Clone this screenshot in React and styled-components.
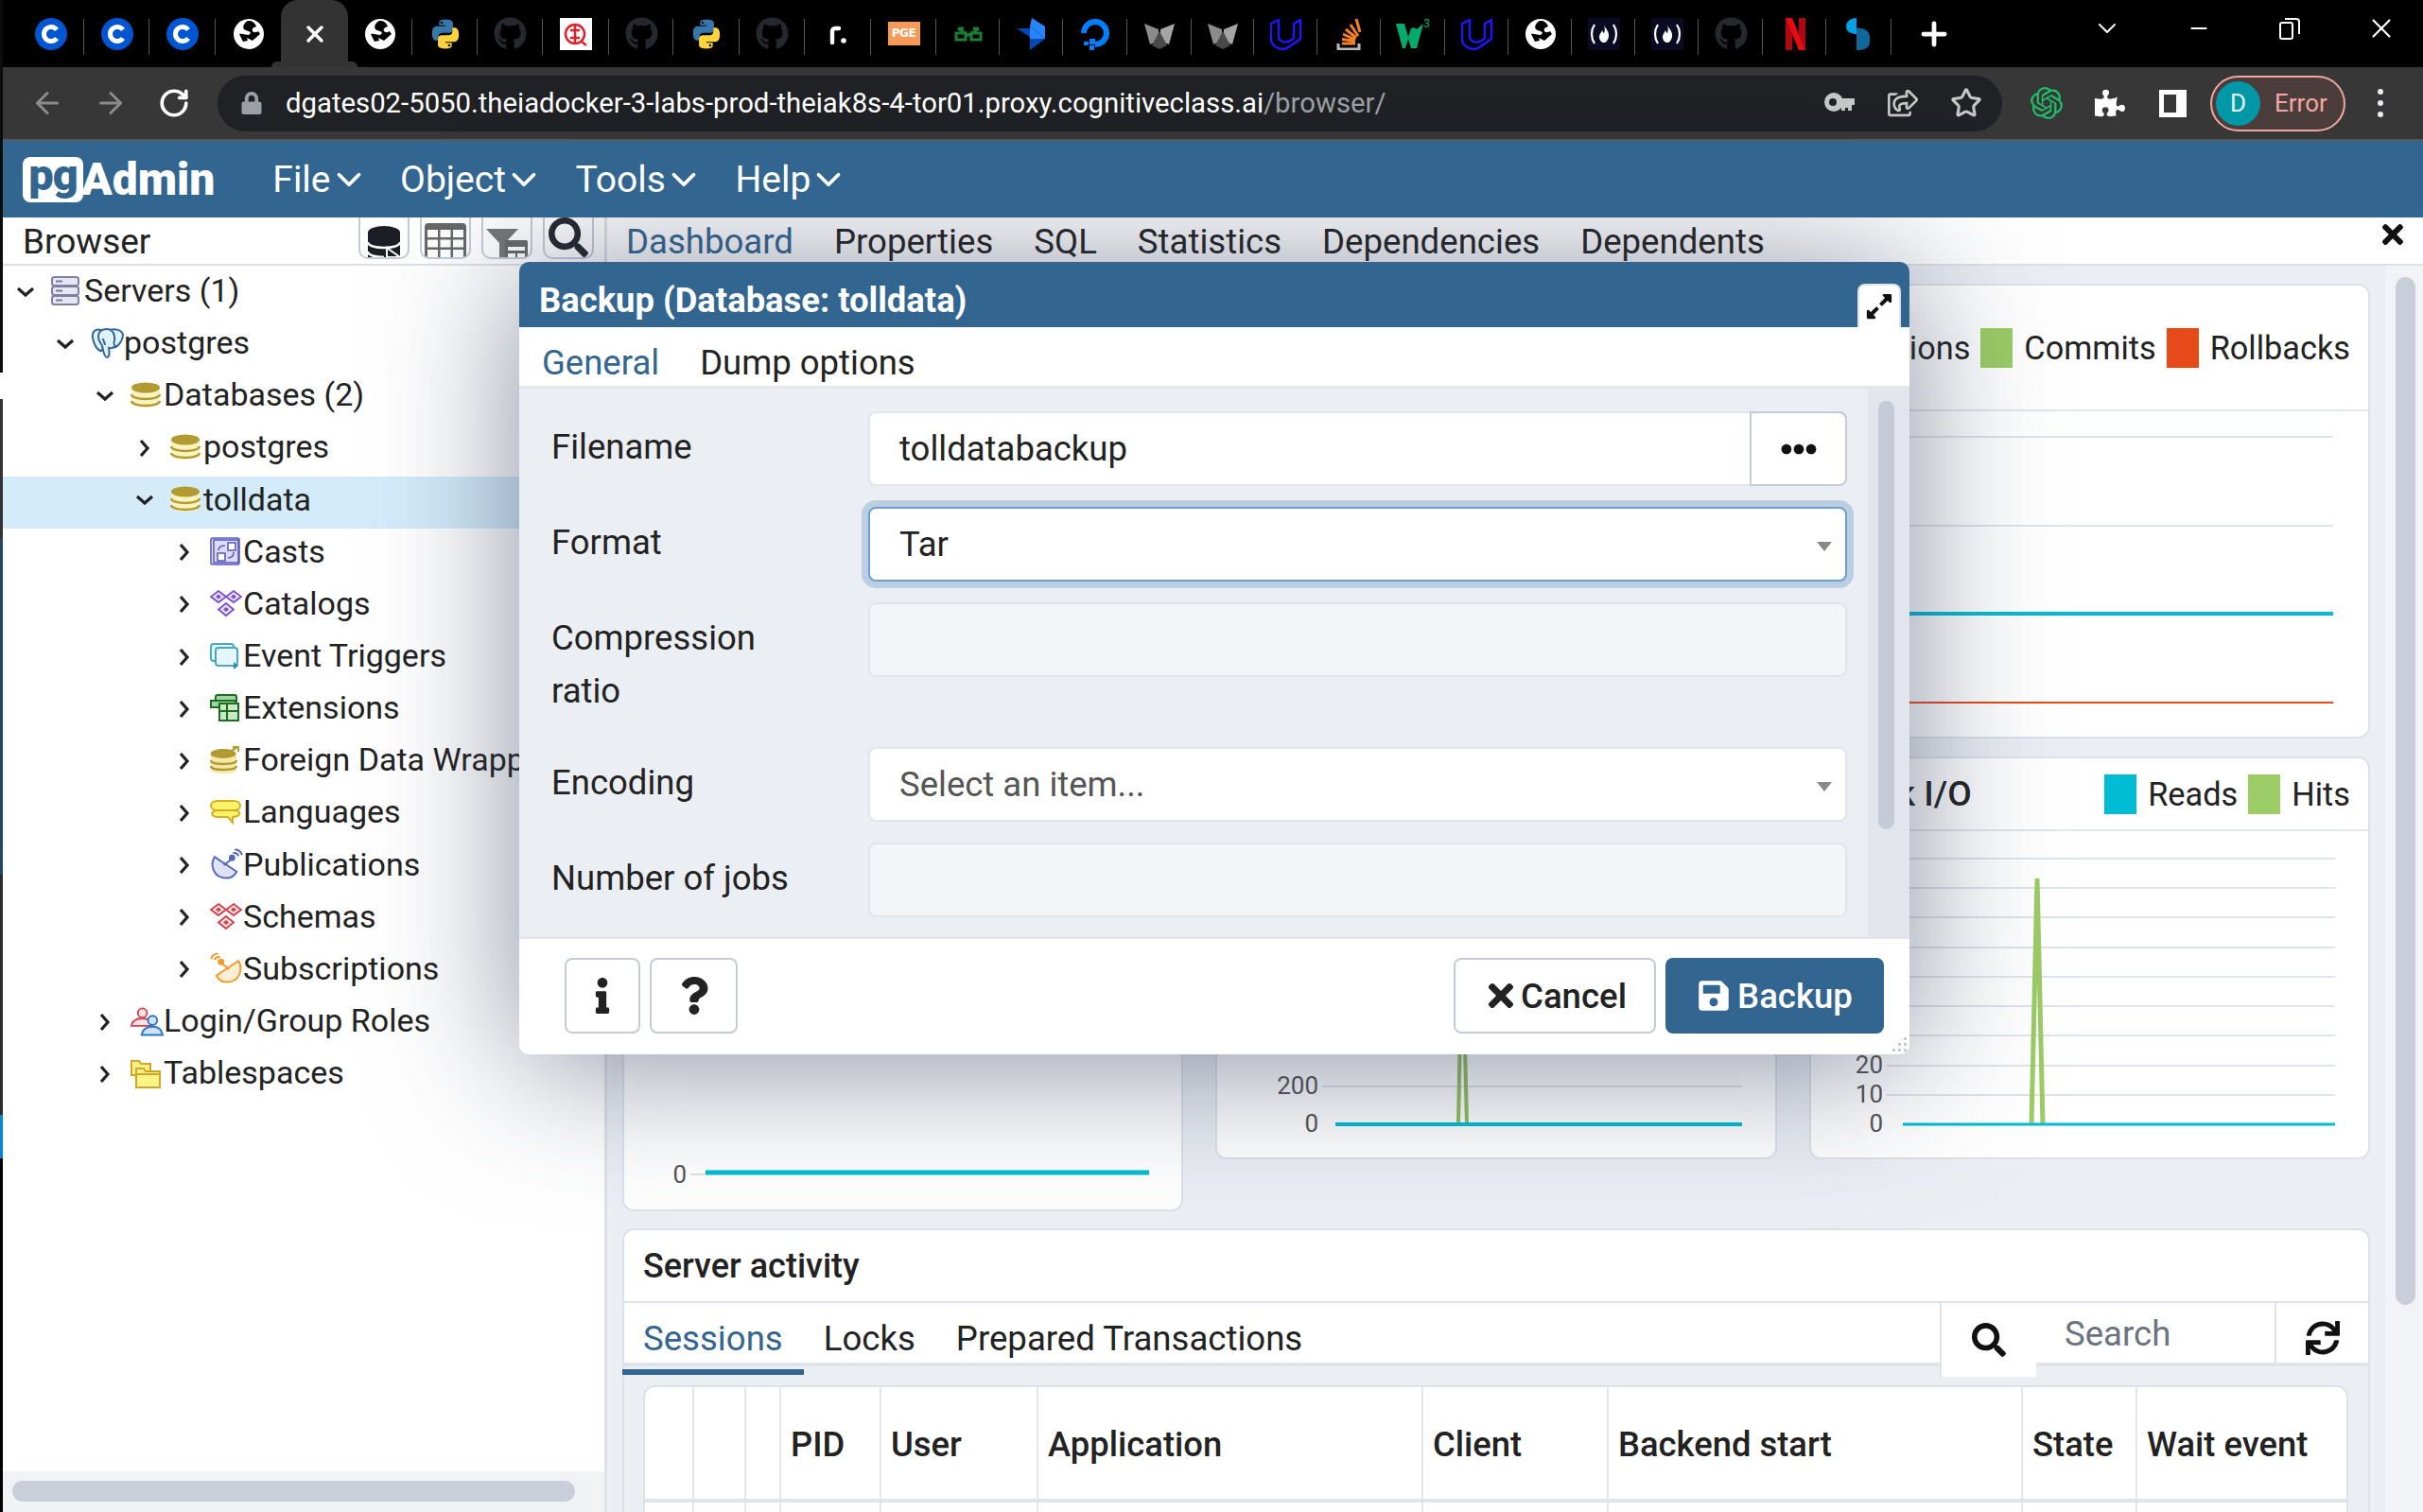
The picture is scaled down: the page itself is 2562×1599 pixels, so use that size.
import React from 'react';
import styled, { createGlobalStyle } from 'styled-components';
import { FaTimes, FaSave, FaInfo, FaQuestion, FaExpandAlt, FaEllipsisH, FaSearch, FaSync, FaGithub, FaLock, FaRegShareSquare, FaPuzzlePiece } from 'react-icons/fa';
import { SiOpenai } from 'react-icons/si';
import { ArrowLeft, ArrowRight, RotateCw, Star, Plus, ChevronDown, Minus, X } from 'lucide-react';

const BLUE = '#326690';

const Global = createGlobalStyle`
  html, body { margin: 0; padding: 0; background: #fff; }
  * { box-sizing: border-box; }
  body { font-family: Roboto, "Liberation Sans", sans-serif; color: #222; }
`;

const Page = styled.div`
  position: relative;
  width: 2562px;
  height: 1599px;
  overflow: hidden;
  display: flex;
  flex-direction: column;
`;

const EdgeStrip = styled.div`
  position: absolute;
  left: 0;
  top: 0;
  width: 3px;
  z-index: 30;
  display: flex;
  flex-direction: column;
`;
const EdgeBit = styled.div`
  height: ${p => p.$h}px;
  background: ${p => p.$c};
`;

/* ---------- chrome ---------- */
const TabStrip = styled.div`
  height: 71px;
  background: #000;
  display: flex;
  padding-left: 19px;
  position: relative;
`;
const Tab = styled.div`
  width: ${p => p.$w}px;
  height: 71px;
  flex: none;
  display: flex;
  align-items: center;
  justify-content: center;
  position: relative;
  &::after {
    content: '';
    display: ${p => (p.$noSep ? 'none' : 'block')};
    position: absolute;
    right: 0;
    top: 20px;
    height: 38px;
    width: 1px;
    background: #555;
  }
  svg { display: block; }
`;
const ActiveTab = styled(Tab)`
  background: #333;
  border-radius: 18px 18px 0 0;
  color: #fff;
  &::before {
    content: '';
    position: absolute;
    left: -10px;
    right: -10px;
    bottom: 0;
    height: 6px;
    background: #333;
    border-radius: 8px 8px 0 0;
  }
`;
const NewTab = styled.div`
  margin-left: 26px;
  height: 71px;
  display: flex;
  align-items: center;
  color: #fff;
`;
const WindowButtons = styled.div`
  position: absolute;
  right: -4px;
  top: 0;
  height: 60px;
  display: flex;
  color: #fff;
`;
const WinBtn = styled.div`
  width: 96.5px;
  height: 60px;
  display: flex;
  align-items: center;
  justify-content: center;
`;
const RestoreIcon = () => (
  <svg width="22" height="24" viewBox="0 0 22 24" fill="none" stroke="#fff" strokeWidth="2">
    <rect x="1" y="6" width="13" height="17" rx="2" />
    <path d="M6 2h12a3 3 0 013 3v13" />
  </svg>
);
const KeyIcon = () => (
  <svg width="32" height="24" viewBox="0 0 32 24" fill="#c4c7c5">
    <path fillRule="evenodd" d="M10 1a10 10 0 110 20 10 10 0 010-20zM9 7a4 4 0 100 8 4 4 0 000-8z" />
    <path d="M18 7h14v7h-3v6h-4v-3h-3v3h-4z" />
  </svg>
);

const Toolbar = styled.div`
  height: 78px;
  background: #373737;
  border-bottom: 2px solid #5a5a5a;
  display: flex;
  align-items: center;
  position: relative;
`;
const NavIcon = styled.div`
  width: ${p => p.$w || 67}px;
  display: flex;
  justify-content: center;
  color: ${p => p.$c || '#fff'};
  flex: none;
`;
const Omnibox = styled.div`
  margin-left: 13px;
  width: 1887px;
  height: 59px;
  background: #202124;
  border-radius: 30px;
  display: flex;
  align-items: center;
  padding-left: 24px;
  flex: none;
`;
const Url = styled.div`
  margin-left: 24px;
  flex: 1;
  font-size: 29.3px;
  color: #fff;
  white-space: nowrap;
  span { color: #9aa0a6; }
`;
const ErrorPill = styled.div`
  margin-left: 6px;
  width: 143px;
  height: 59px;
  flex: none;
  border-radius: 30px;
  border: 2px solid #f2a9a1;
  background: #4a3d3c;
  display: flex;
  align-items: center;
  padding-left: 4px;
  gap: 15px;
  font-size: 26px;
  color: #f2a9a1;
`;
const Avatar = styled.div`
  width: 47px;
  height: 47px;
  border-radius: 50%;
  background: #0097a7;
  color: #e6f7f9;
  display: flex;
  align-items: center;
  justify-content: center;
  font-size: 26px;
`;
const Kebab = styled.div`
  margin-left: 34px;
  display: flex;
  flex-direction: column;
  gap: 6px;
  i { display: block; width: 6px; height: 6px; border-radius: 50%; background: #e8eaed; }
`;
const SidePanelIcon = styled.div`
  width: 29px;
  height: 29px;
  border: 5px solid #fff;
  border-right-width: 11px;
`;

/* ---------- pgadmin nav ---------- */
const NavBar = styled.div`
  height: 81px;
  background: ${BLUE};
  display: flex;
  align-items: center;
  padding-left: 24px;
  color: #fff;
  position: relative;
  z-index: 20;
`;
const Logo = styled.div`
  display: flex;
  align-items: center;
  margin-right: 61px;
  b { font-size: 48px; font-weight: 900; letter-spacing: 0; margin-left: -2px; }
`;
const LogoBox = styled.div`
  width: 64px;
  height: 48px;
  background: #fff;
  border-radius: 8px;
  color: ${BLUE};
  font-size: 47px;
  font-weight: 900;
  line-height: 38px;
  text-align: center;
  letter-spacing: -1px;
`;
const Menu = styled.div`
  display: flex;
  align-items: center;
  font-size: 39px;
  gap: 0;
  margin-right: 33.500px;
  svg { margin-left: -2px; }
`;

/* ---------- workspace ---------- */
const Workspace = styled.div`
  flex: 1;
  min-height: 0;
  display: flex;
`;
const LeftPanel = styled.div`
  width: 640px;
  flex: none;
  display: flex;
  flex-direction: column;
  background: #fff;
`;
const BrowserBar = styled.div`
  height: 51px;
  flex: none;
  border-bottom: 2px solid #dde1e8;
  display: flex;
  align-items: flex-start;
  padding-left: 24px;
  overflow: hidden;
`;
const BrowserTitle = styled.div`
  font-size: 37px;
  line-height: 51px;
  width: 355px;
`;
const ToolBtn = styled.div`
  width: 54px;
  height: 44px;
  margin-right: 11px;
  border: 2px solid #c6cbd8;
  border-top: none;
  border-radius: 0 0 10px 10px;
  display: flex;
  justify-content: center;
  overflow: hidden;
  svg { display: block; }
`;
const Tree = styled.div`
  flex: 1;
  padding-top: 2px;
  overflow: hidden;
`;
const Row = styled.div`
  height: 55.15px;
  display: flex;
  align-items: center;
  padding-left: ${p => 15 + p.$depth * 42}px;
  background: ${p => (p.$selected ? '#d4ecfa' : 'transparent')};
  white-space: nowrap;
  font-size: 34px;
  color: #222;
`;
const Chevron = styled.div`
  width: 39px;
  flex: none;
  display: flex;
  padding-left: 2px;
  margin-top: -4px;
`;
const TreeIcon = styled.div`
  width: 35px;
  height: 34px;
  margin-top: -6px;
  flex: none;
  display: flex;
  align-items: center;
  svg { display: block; }
`;
const RowLabel = styled.span`
  margin-top: -7px;
`;
const HScrollTrack = styled.div`
  height: 43px;
  flex: none;
  background: #f1f2f4;
  padding: 10px 32px 11px 13px;
`;
const Thumb = styled.div`
  height: 100%;
  background: #c9ced8;
  border-radius: 11px;
`;

const RightPanel = styled.div`
  flex: 1;
  min-width: 0;
  display: flex;
  flex-direction: column;
  border-left: 3px solid #dde1e8;
  margin-left: -1px;
  background: #ebeef3;
`;
const DashTabs = styled.div`
  height: 51px;
  flex: none;
  background: #fff;
  border-bottom: 2px solid #dde1e8;
  display: flex;
  align-items: flex-start;
  padding-left: 20px;
  gap: 43px;
  font-size: 36.6px;
  line-height: 51px;
`;
const DashTab = styled.div`
  color: ${p => (p.$active ? BLUE : '#222')};
`;
const PanelClose = styled.div`
  margin-left: auto;
  margin-right: 16px;
  margin-top: 2px;
  line-height: 0;
  color: #111;
`;
const ScrollBody = styled.div`
  flex: 1;
  min-height: 0;
  display: flex;
`;
const Dashboard = styled.div`
  width: 1880px;
  flex: none;
  padding: 19px 16px 0 16px;
  display: flex;
  flex-direction: column;
  overflow: hidden;
`;
const MainScroll = styled.div`
  flex: 1;
  background: #f2f3f6;
  padding: 12px 8px 0 11px;
`;
const MainThumb = styled.div`
  height: 1087px;
  background: #c9ced8;
  border-radius: 11px;
`;
const CardRow = styled.div`
  display: flex;
  align-items: flex-start;
  gap: 34px;
  margin-bottom: ${p => p.$mb}px;
`;
const Card = styled.div`
  flex: 1;
  min-width: 0;
  height: ${p => p.$h}px;
  background: #fff;
  border: 2px solid #dde1e8;
  border-radius: 12px;
  overflow: hidden;
`;
const CardHeader = styled.div`
  height: ${p => p.$h}px;
  border-bottom: 2px solid #e2e5eb;
  padding: 0 19px 0 18px;
  display: flex;
  align-items: center;
  white-space: nowrap;
`;
const CardTitle = styled.div`
  flex: 1;
  min-width: 0;
  overflow: hidden;
  font-size: 37px;
  font-weight: 500;
`;
const LegendSwatch = styled.i`
  display: block;
  flex: none;
  width: 34px;
  height: 42px;
  background: ${p => p.$c};
  margin: 0 12px 0 11px;
`;
const LegendText = styled.span`
  flex: none;
  font-size: 34.3px;
`;
const ChartSvg = styled.svg`
  display: block;
  text { font-family: Roboto, sans-serif; font-size: 26px; fill: #555; text-anchor: end; }
`;

const Activity = styled.div`
  background: #fff;
  border: 2px solid #dde1e8;
  border-bottom: none;
  border-radius: 12px 12px 0 0;
  flex: 1;
  display: flex;
  flex-direction: column;
`;
const ActivityTitle = styled.div`
  height: 77px;
  flex: none;
  padding: 0 20px;
  display: flex;
  align-items: center;
  font-size: 36px;
  font-weight: 500;
  border-bottom: 2px solid #dde1e8;
`;
const ActivityTabs = styled.div`
  height: 67px;
  flex: none;
  display: flex;
  border-bottom: 4px solid #e0e3ea;
`;
const SubTabs = styled.div`
  flex: 1;
  display: flex;
  gap: 43px;
  padding: 10px 0 0 20px;
  font-size: 36.6px;
  line-height: 56px;
`;
const SubTab = styled.div`
  position: relative;
  color: ${p => (p.$active ? BLUE : '#222')};
  ${p => p.$active && `
    &::after {
      content: '';
      position: absolute;
      left: -22px;
      right: -22px;
      bottom: -13px;
      height: 6px;
      background: ${BLUE};
    }
  `}
`;
const SearchCell = styled.div`
  width: 102px;
  height: 78px;
  background: #fff;
  border-left: 2px solid #e0e3ea;
  position: relative;
  z-index: 1;
  display: flex;
  justify-content: center;
  padding-top: 21px;
  color: #111;
`;
const SearchText = styled.div`
  width: 252px;
  padding: 8px 0 0 30px;
  font-size: 36.6px;
  line-height: 50px;
  color: #6b7280;
`;
const RefreshCell = styled.div`
  width: 99px;
  border-left: 2px solid #e0e3ea;
  display: flex;
  justify-content: center;
  padding-top: 19px;
  color: #111;
`;
const ActivityBody = styled.div`
  flex: 1;
  background: #ebeef3;
  padding: 20px 21px 0 20px;
`;
const SessionTable = styled.div`
  background: #fff;
  border: 2px solid #dde1e8;
  border-bottom: none;
  border-radius: 12px 12px 0 0;
  height: 200px;
`;
const TableRow = styled.div`
  display: grid;
  grid-template-columns: 52px 55px 37px 106px 166px 407px 196px 438px 121px 1fr;
  height: ${p => p.$h}px;
  border-bottom: ${p => (p.$line ? '4px solid #e0e3ea' : 'none')};
`;
const HeadCell = styled.div`
  border-right: 2px solid #e3e6eb;
  padding: 2px 0 0 10px;
  display: flex;
  align-items: center;
  font-size: 36.4px;
  font-weight: 500;
  white-space: nowrap;
  &:last-child { border-right: none; }
`;

/* ---------- dialog ---------- */
const Dialog = styled.div`
  position: absolute;
  left: 549px;
  top: 277px;
  width: 1470px;
  height: 838px;
  z-index: 10;
  background: #fff;
  border-radius: 10px;
  box-shadow: 0 10px 150px rgba(50, 60, 90, 0.58);
  display: flex;
  flex-direction: column;
`;
const DialogHead = styled.div`
  height: 69px;
  flex: none;
  background: ${BLUE};
  border-radius: 10px 10px 0 0;
  color: #fff;
  font-size: 36.4px;
  font-weight: 700;
  padding: 12px 9px 0 21px;
  display: flex;
  align-items: center;
  justify-content: space-between;
`;
const ExpandBtn = styled.div`
  width: 46px;
  height: 46px;
  align-self: flex-end;
  background: #fff;
  border: 2px solid #dde1e8;
  border-bottom: none;
  border-radius: 8px 8px 0 0;
  color: #111;
  display: flex;
  align-items: center;
  justify-content: center;
`;
const DialogTabs = styled.div`
  height: 65px;
  flex: none;
  border-bottom: 3px solid #e3e6ec;
  padding: 10px 0 0 24px;
  display: flex;
  gap: 43px;
  font-size: 36.5px;
  line-height: 56px;
`;
const DialogBody = styled.div`
  height: 579px;
  flex: none;
  display: flex;
  background: #ebeef3;
  overflow: hidden;
`;
const Form = styled.div`
  width: 1426px;
  flex: none;
  padding: 24px 22px 0 34px;
  display: flex;
  flex-direction: column;
  gap: 22px;
`;
const FormRow = styled.div`
  display: grid;
  grid-template-columns: 335px 1fr;
  align-items: start;
`;
const Label = styled.div`
  font-size: 36.5px;
  line-height: 56px;
  padding: 10px 0 9px;
  max-width: 260px;
`;
const Field = styled.div`
  height: 79px;
  border: 2px solid ${p => (p.$focus ? '#6c9fca' : '#e1e4ea')};
  border-radius: 8px;
  background: ${p => (p.$disabled ? '#f3f5f8' : '#fff')};
  display: flex;
  align-items: center;
  padding-left: 31px;
  font-size: 36.5px;
  color: ${p => (p.$placeholder ? '#555' : '#222')};
  position: relative;
  box-shadow: ${p => (p.$focus ? '0 0 0 7px #bacfe1' : 'none')};
`;
const Caret = styled.i`
  position: absolute;
  right: 14px;
  top: 35px;
  border-left: 8px solid transparent;
  border-right: 8px solid transparent;
  border-top: 10px solid #888;
`;
const EllipsisBtn = styled.div`
  position: absolute;
  right: -2px;
  top: -2px;
  width: 103px;
  height: 79px;
  border: 2px solid #c6cbd8;
  border-radius: 0 8px 8px 0;
  display: flex;
  align-items: center;
  justify-content: center;
  color: #111;
`;
const DialogScroll = styled.div`
  flex: 1;
  background: #e2e5ec;
  padding: 13px 16px 0 11px;
`;
const DialogThumb = styled.div`
  height: 453px;
  background: #c5cbd6;
  border-radius: 9px;
`;
const DialogFoot = styled.div`
  flex: 1;
  border-top: 3px solid #e3e6ec;
  padding: 20px 27px 0 48px;
  display: flex;
  align-items: flex-start;
  gap: 10px;
  position: relative;
`;
const Btn = styled.div`
  width: ${p => p.$w}px;
  height: 80px;
  flex: none;
  border-radius: 8px;
  border: 2px solid ${p => (p.$primary ? BLUE : '#c6cbd8')};
  background: ${p => (p.$primary ? BLUE : '#fff')};
  color: ${p => (p.$primary ? '#fff' : '#222')};
  display: flex;
  align-items: center;
  justify-content: center;
  gap: ${p => p.$gap ?? 7}px;
  font-size: 36.6px;
  font-weight: 500;
  margin-left: ${p => (p.$push ? 'auto' : '0')};
`;
const Grip = styled.svg`
  position: absolute;
  right: 2px;
  bottom: 2px;
`;

/* ---------- favicons ---------- */
const Ico = ({ children, w = 34, h = 34, vb = '0 0 34 34' }) => (
  <svg width={w} height={h} viewBox={vb} fill="none">{children}</svg>
);
const Coursera = () => (
  <Ico>
    <ellipse cx="17" cy="17" rx="17" ry="17" fill="#0056d2" />
    <path d="M23 12.5a7.5 7.5 0 100 9" stroke="#fff" strokeWidth="5" />
  </Ico>
);
const Globe = () => (
  <Ico>
    <circle cx="17" cy="17" r="15" fill="#fff" />
    <path d="M17 2c-5 3-7 7-5 10 2 2 6 1 7 4l-2 2c-3 0-7-2-10-1l4 8 5-1-1-3 6 3 8-7-2-3c-3 2-5 1-6 0-1-3 1-4 4-5-1-3-4-6-8-7z" fill="#000" />
    <circle cx="17" cy="17" r="15" stroke="#fff" strokeWidth="2" />
  </Ico>
);
const Python = () => (
  <svg width="34" height="34" viewBox="0 0 24 24">
    <path fill="#3776ab" d="M11.9 1C7 1 7.3 3.1 7.3 3.1v2.4H12v.7H5.4S2 5.8 2 11.4s3 5.4 3 5.4h1.8v-2.6s-.1-3 3-3h5s2.8 0 2.8-2.8V3.8S18 1 11.9 1zM9.2 2.6a.9.9 0 110 1.8.9.9 0 010-1.8z" />
    <path fill="#ffd43b" transform="rotate(180 12 12)" d="M11.9 1C7 1 7.3 3.1 7.3 3.1v2.4H12v.7H5.4S2 5.8 2 11.4s3 5.4 3 5.4h1.8v-2.6s-.1-3 3-3h5s2.8 0 2.8-2.8V3.8S18 1 11.9 1zM9.2 2.6a.9.9 0 110 1.8.9.9 0 010-1.8z" />
  </svg>
);
const Github = () => <FaGithub size={35} color="#25292e" />;
const RedSeal = () => (
  <Ico>
    <rect width="34" height="34" fill="#fff" />
    <circle cx="16" cy="17" r="10" stroke="#e0202a" strokeWidth="2.5" />
    <path d="M16 6v22M11 13h10M11 21h10M23 25l5 4" stroke="#e0202a" strokeWidth="2.5" />
  </Ico>
);
const ReplIt = () => (
  <Ico>
    <path d="M11 26V14a3 3 0 013-3h4" stroke="#fff" strokeWidth="4.4" strokeLinecap="round" />
    <circle cx="23" cy="24" r="2.8" fill="#fff" />
  </Ico>
);
const PgeBadge = styled.div`
  width: 34px;
  height: 25px;
  background: #f79a55;
  color: #fff;
  font-family: "DejaVu Sans", sans-serif;
  font-size: 12px;
  font-weight: 700;
  line-height: 25px;
  text-align: center;
  letter-spacing: -0.5px;
`;
const Glasses = () => (
  <Ico>
    <g stroke="#1d7d33" strokeWidth="3">
      <rect x="4" y="16" width="10" height="7" />
      <rect x="20" y="16" width="10" height="7" />
      <path d="M14 18h6M6 11l10 7M28 11l-10 7M6 11h6M22 11h6" />
    </g>
  </Ico>
);
const BlueKite = () => (
  <Ico>
    <path d="M17 0l14 9v13L15 9z" fill="#2684ff" />
    <path d="M1 11l14 0 16 11-16 12V20z" fill="#0052cc" opacity=".9" />
    <path d="M15 9l16 13H15z" fill="#2684ff" />
  </Ico>
);
const Ocean = () => (
  <Ico>
    <path d="M17 28A12 12 0 1 0 5 16" stroke="#0080ff" strokeWidth="6" />
    <path d="M11 22h6v6h-6zM5 25h5v4H5zM11 29h5v5h-5z" fill="#0080ff" />
  </Ico>
);
const Shield = () => (
  <Ico>
    <path d="M1 6l15 6v12L7 28z" fill="#8b8b8b" />
    <path d="M33 6l-15 6v12l9 4z" fill="#a5a5a5" />
    <path d="M9 29l8-15 8 15-8 4z" fill="#4a4a4a" />
  </Ico>
);
const Udacity = () => (
  <Ico>
    <path d="M1 6v17c0 5 6 10 13 10 3 0 7-3 18-11V2l-7 4v14c0 3-8 7-12 5-3-1-4-3-4-6V2z" stroke="#2015ff" strokeWidth="2.4" strokeLinejoin="round" />
  </Ico>
);
const StackOv = () => (
  <Ico>
    <path d="M5 27v6h22v-6" stroke="#bcbbbb" strokeWidth="3" />
    <path d="M9 27h14M9 22.5l14 2M10 17l13 6M13 12l11 9M18 7l8 12M24 1l4 14" stroke="#f48024" strokeWidth="3" />
  </Ico>
);
const W3Text = styled.span`
  position: absolute;
  right: 0;
  top: 0;
  font-size: 12px;
  color: #04aa6d;
  line-height: 12px;
`;
const W3Wrap = styled.div`
  position: relative;
  width: 36px;
  height: 34px;
`;
const W3 = () => (
  <W3Wrap>
    <svg width="30" height="34" viewBox="0 0 30 34"><path d="M0 6h9l4 14 3-9 3-1 3 2 7-6-7 26h-6l-3-10-3 10H7z" fill="#04aa6d" /></svg>
    <W3Text>3</W3Text>
  </W3Wrap>
);
const Fcc = () => (
  <Ico>
    <rect width="34" height="34" fill="#0a0a23" />
    <path d="M7 7c-4 6-4 14 0 20M27 7c4 6 4 14 0 20" stroke="#fff" strokeWidth="2.2" />
    <path d="M17 7c1 4 6 7 5 13-1 4-3 6-5 6s-5-2-5-6c0-3 2-4 3-7 1 2 1 3 2 3 1-2 1-5 0-9z" fill="#fff" />
  </Ico>
);
const Netflix = () => (
  <Ico>
    <path d="M7 0h7v34l-7 1z" fill="#b1060f" />
    <path d="M21 0h7v35l-7-1z" fill="#b1060f" />
    <path d="M7 0h7l14 35-7-1z" fill="#e50914" />
  </Ico>
);
const Sharp = () => (
  <Ico>
    <path d="M14 0c-5 0-11 3-11 9s6 8 11 8z" fill="#00a1e4" />
    <path d="M14 11c6-1 14 2 14 9v5c0 6-5 9-12 9h-2z" fill="#10689a" />
  </Ico>
);

const TABS = [
  [Coursera, 70], [Coursera, 69], [Coursera, 70], [Globe, 69, true],
  null,
  [Globe, 68], [Python, 69], [Github, 69], [RedSeal, 70], [Github, 68], [Python, 70], [Github, 69], [ReplIt, 70],
  [PgeBadge, 69], [Glasses, 67], [BlueKite, 67], [Ocean, 68], [Shield, 68], [Shield, 66], [Udacity, 67], [StackOv, 67], [W3, 68],
  [Udacity, 67], [Globe, 67], [Fcc, 67], [Fcc, 67], [Github, 68], [Netflix, 67], [Sharp, 69],
];

/* ---------- tree icons ---------- */
const Db = ({ fill = '#f8f3bf', top = '#b29a33' }) => (
  <svg width="32" height="28" viewBox="0 0 32 28">
    <path d="M1 6v16c0 3 7 5 15 5s15-2 15-5V6z" fill={fill} />
    <path d="M1 13c0 3 7 5 15 5s15-2 15-5M1 20c0 3 7 5 15 5s15-2 15-5" stroke={top} strokeWidth="2.5" fill="none" />
    <ellipse cx="16" cy="6" rx="15" ry="5.5" fill={top} />
  </svg>
);
const Servers = () => (
  <svg width="30" height="32" viewBox="0 0 30 32">
    {[1, 11, 21].map(y => (
      <g key={y}>
        <rect x="1" y={y} width="28" height="9" rx="2.5" fill="#e7e7f2" stroke="#8080a6" strokeWidth="2" />
        <path d={`M5 ${y + 4.5}h7`} stroke="#77779c" strokeWidth="2" />
      </g>
    ))}
  </svg>
);
const Elephant = () => (
  <svg width="35" height="34" viewBox="0 0 35 34" fill="#dff1fb" stroke="#336791" strokeWidth="2">
    <path d="M11 3C5 1 1 5 2 11c1 6 4 12 8 14 2 1 3-3 3-6z" />
    <path d="M20 3c6-2 13 0 14 5 0 5-3 9-6 12-2 2-6 2-8 1z" />
    <path d="M17 2c-6 0-9 3-9 8 0 5 3 7 4 10 1 4 2 12 5 12s3-6 2-10c3 1 5-1 7-2-2-2-2-3-1-6 1-6-2-12-8-12z" />
    <path d="M13 12c0 3 2 4 2 7" fill="none" />
  </svg>
);
const Casts = () => (
  <svg width="32" height="30" viewBox="0 0 32 30" fill="none" stroke="#5c5cc0" strokeWidth="1.6">
    <rect x="1" y="1" width="30" height="28" rx="2" fill="#e6e6fb" />
    <rect x="4" y="3" width="26" height="24" fill="#dcdcf8" />
    <rect x="8" y="17" width="8" height="8" fill="#fff" />
    <rect x="19" y="6" width="8" height="8" fill="#fff" />
    <path d="M9 14c0-4 3-5 7-5M25 16c0 4-2 6-6 6" />
  </svg>
);
const Diamonds = ({ c, bg }) => (
  <svg width="34" height="30" viewBox="0 0 34 30" fill={bg} stroke={c} strokeWidth="1.8">
    <path d="M9 2l8 6-8 6-8-6zM25 2l8 6-8 6-8-6zM17 15l8 6.500-8 6.500-8-6.500z" />
    <path d="M9 5.500l3 2.500-3 2.500-3-2.500zM25 5.500l3 2.500-3 2.500-3-2.500zM17 19l3 2.500-3 2.500-3-2.500z" fill={c} stroke="none" />
  </svg>
);
const Triggers = () => (
  <svg width="32" height="28" viewBox="0 0 32 28" fill="#e4f7fb" stroke="#4aa7c0" strokeWidth="2">
    <rect x="1" y="1" width="24" height="18" rx="3" />
    <rect x="6" y="5" width="23" height="19" rx="3" />
    <path d="M25 20l5 4-5 4z" fill="#2a8fa8" stroke="none" />
  </svg>
);
const Extensions = () => (
  <svg width="32" height="30" viewBox="0 0 32 30" fill="#9fd3a0" stroke="#1b6e1f" strokeWidth="2">
    <rect x="6" y="1" width="22" height="8" rx="2" />
    <rect x="1" y="7" width="26" height="7" />
    <rect x="10" y="10" width="20" height="18" fill="#c9e9c6" />
    <path d="M10 18h20M18 10v18" />
  </svg>
);
const Fdw = () => (
  <svg width="32" height="30" viewBox="0 0 32 30">
    <g transform="translate(0 3)"><path d="M1 5v17c0 3 6 4 13 4s14-1 14-4V5z" fill="#f4e9a9" /><path d="M1 12c0 3 6 4 13 4s14-1 14-4M1 18c0 3 6 4 13 4s14-1 14-4" stroke="#b29a33" strokeWidth="2.4" fill="none" /><ellipse cx="14" cy="5" rx="13.500" ry="5" fill="#b29a33" /></g>
    <path d="M20 6l8-4M24 1h6v5" stroke="#b29a33" strokeWidth="2" fill="none" />
  </svg>
);
const Languages = () => (
  <svg width="33" height="28" viewBox="0 0 33 28" fill="#f9f36b" stroke="#d8ad1e" strokeWidth="2">
    <path d="M8 2h17c4 0 7 2 7 5s-3 5-7 5H8c-4 0-7-2-7-5s3-5 7-5z" />
    <path d="M6 12h21c3 0 5 2 4 4s-4 3-7 3v6l-5-6H8c-4 0-6-2-6-4z" />
  </svg>
);
const Dish = ({ c, bg, flip }) => (
  <svg width="36" height="34" viewBox="0 0 36 34" fill="none" stroke={c} strokeWidth="2" style={flip ? { transform: 'scaleX(-1)' } : undefined}>
    <path d="M5 9C0 17 3 32 18 32c5 0 9-3 11-7z" fill={bg} />
    <path d="M15 18l9-7" />
    <circle cx="24" cy="10" r="2.500" fill={c} />
    <path d="M25 5c3-1 5 0 6 3M27 1c4 0 7 3 8 6" />
  </svg>
);
const Roles = () => (
  <svg width="36" height="32" viewBox="0 0 36 32" strokeWidth="2">
    <g fill="#fbe3e5" stroke="#cc4455"><circle cx="13" cy="7" r="5" /><path d="M1 21c1-6 5-8 12-8s10 3 11 8z" /></g>
    <g fill="#cfe4fa" stroke="#2d74c4"><circle cx="24" cy="15" r="5" /><path d="M12 31c1-6 5-9 12-9s10 3 11 9z" /></g>
  </svg>
);
const Folders = () => (
  <svg width="32" height="32" viewBox="0 0 32 32" fill="#f7f384" stroke="#cfa52a" strokeWidth="2">
    <path d="M1 3h8l2 3h10v12H1z" />
    <path d="M6 11h8l2 3h15v3H6z" />
    <rect x="6" y="17" width="25" height="14" />
  </svg>
);

const Chev = ({ open }) => (
  <svg width="20" height="20" viewBox="0 0 20 20" fill="none" stroke="#222" strokeWidth="3.2">
    {open ? <path d="M2 6l8 7 8-7" /> : <path d="M6 2l7 8-7 8" />}
  </svg>
);

const TREE = [
  { d: 0, open: true, icon: <Servers />, t: 'Servers (1)' },
  { d: 1, open: true, icon: <Elephant />, t: 'postgres' },
  { d: 2, open: true, icon: <Db />, t: 'Databases (2)' },
  { d: 3, icon: <Db />, t: 'postgres' },
  { d: 3, open: true, sel: true, icon: <Db />, t: 'tolldata' },
  { d: 4, icon: <Casts />, t: 'Casts' },
  { d: 4, icon: <Diamonds c="#7a4fd0" bg="#ece3fb" />, t: 'Catalogs' },
  { d: 4, icon: <Triggers />, t: 'Event Triggers' },
  { d: 4, icon: <Extensions />, t: 'Extensions' },
  { d: 4, icon: <Fdw />, t: 'Foreign Data Wrappers' },
  { d: 4, icon: <Languages />, t: 'Languages' },
  { d: 4, icon: <Dish c="#5566bb" bg="#dfe3f7" />, t: 'Publications' },
  { d: 4, icon: <Diamonds c="#cf3f4a" bg="#fbe3e5" />, t: 'Schemas' },
  { d: 4, icon: <Dish c="#f09a28" bg="#fdeed6" flip />, t: 'Subscriptions' },
  { d: 2, icon: <Roles />, t: 'Login/Group Roles' },
  { d: 2, icon: <Folders />, t: 'Tablespaces' },
];

const Grid = ({ ys, x1, x2 }) => ys.map(y => <line key={y} x1={x1} x2={x2} y1={y} y2={y} stroke="#e0e3ea" strokeWidth="2" />);

const DbTool = () => (
  <svg width="38" height="40" viewBox="0 0 38 40" style={{ marginTop: 8 }}>
    <path d="M2 8v26h34V8z" fill="#1c1f26" />
    <path d="M2 18c0 4 8 6 17 6s17-2 17-6M2 28c0 4 8 6 17 6" stroke="#fff" strokeWidth="2.5" fill="none" />
    <ellipse cx="19" cy="8" rx="17" ry="7" fill="#1c1f26" />
    <path d="M22 24l14 10H22z" fill="#1c1f26" stroke="#fff" strokeWidth="2" />
  </svg>
);
const GridTool = () => (
  <svg width="44" height="40" viewBox="0 0 44 40" style={{ marginTop: 6 }}>
    <rect width="44" height="40" rx="4" fill="#686868" />
    {[0, 1, 2].map(r => [0, 1, 2].map(c => <rect key={`${r}${c}`} x={3 + c * 13.5} y={7 + r * 10.5} width="11" height="8" fill="#fff" />))}
  </svg>
);
const FilterTool = () => (
  <svg width="44" height="34" viewBox="0 0 44 34" style={{ marginTop: 12 }}>
    <path d="M0 0h34L20 15v19h-6V15z" fill="#777" />
    <rect x="20" y="12" width="24" height="22" rx="2" fill="#686868" />
    <path d="M23 19h18v4H23zM23 26h8v8h-8zM33 26h8v8h-8z" fill="#fff" />
  </svg>
);

export default function App() {
  return (
    <Page>
      <Global />
      <EdgeStrip>
        <EdgeBit $h={394} $c="#0c0c0c" />
        <EdgeBit $h={28} $c="#fff" />
        <EdgeBit $h={148} $c="#333" />
        <EdgeBit $h={355} $c="#1d4a68" />
        <EdgeBit $h={254} $c="#2b2b2b" />
        <EdgeBit $h={46} $c="#0a84d8" />
        <EdgeBit $h={374} $c="#000" />
      </EdgeStrip>

      <TabStrip>
        {TABS.map((t, i) => {
          if (!t) return <ActiveTab key={i} $w={71} $noSep><X size={28} strokeWidth={3} /></ActiveTab>;
          const Icon = t[0];
          return <Tab key={i} $w={t[1]} $noSep={t[2]}><Icon>{Icon === PgeBadge ? 'PGE' : undefined}</Icon></Tab>;
        })}
        <NewTab><Plus size={38} strokeWidth={3} /></NewTab>
        <WindowButtons>
          <WinBtn><ChevronDown size={32} strokeWidth={1.5} /></WinBtn>
          <WinBtn><Minus size={26} strokeWidth={2} /></WinBtn>
          <WinBtn><RestoreIcon /></WinBtn>
          <WinBtn><X size={34} strokeWidth={1.5} /></WinBtn>
        </WindowButtons>
      </TabStrip>

      <Toolbar>
        <NavIcon $w={16} />
        <NavIcon $c="#8b8c8e"><ArrowLeft size={36} strokeWidth={2} /></NavIcon>
        <NavIcon $c="#8b8c8e"><ArrowRight size={36} strokeWidth={2} /></NavIcon>
        <NavIcon><RotateCw size={34} strokeWidth={2.6} /></NavIcon>
        <Omnibox>
          <FaLock size={24} color="#9aa0a6" />
          <Url>dgates02-5050.theiadocker-3-labs-prod-theiak8s-4-tor01.proxy.cognitiveclass.ai<span>/browser/</span></Url>
          <NavIcon><KeyIcon /></NavIcon>
          <NavIcon $c="#c4c7c5"><FaRegShareSquare size={32} /></NavIcon>
          <NavIcon $c="#c4c7c5"><Star size={34} strokeWidth={2.2} /></NavIcon>
          <NavIcon $w={5} />
        </Omnibox>
        <NavIcon $w={80} $c="#1fbf6a" style={{ paddingLeft: 14 }}><SiOpenai size={34} /></NavIcon>
        <NavIcon><FaPuzzlePiece size={32} /></NavIcon>
        <NavIcon><SidePanelIcon /></NavIcon>
        <ErrorPill><Avatar>D</Avatar>Error</ErrorPill>
        <Kebab><i /><i /><i /></Kebab>
      </Toolbar>

      <NavBar>
        <Logo><LogoBox>pg</LogoBox><b>Admin</b></Logo>
        {['File', 'Object', 'Tools', 'Help'].map(m => (
          <Menu key={m}>{m}<ChevronDown size={42} strokeWidth={2.2} /></Menu>
        ))}
      </NavBar>

      <Workspace>
        <LeftPanel>
          <BrowserBar>
            <BrowserTitle>Browser</BrowserTitle>
            <ToolBtn><DbTool /></ToolBtn>
            <ToolBtn><GridTool /></ToolBtn>
            <ToolBtn><FilterTool /></ToolBtn>
            <ToolBtn><FaSearch size={42} color="#24272c" /></ToolBtn>
          </BrowserBar>
          <Tree>
            {TREE.map((r, i) => (
              <Row key={i} $depth={r.d} $selected={r.sel}>
                <Chevron><Chev open={r.open} /></Chevron>
                <TreeIcon>{r.icon}</TreeIcon>
                <RowLabel>{r.t}</RowLabel>
              </Row>
            ))}
          </Tree>
          <HScrollTrack><Thumb /></HScrollTrack>
        </LeftPanel>

        <RightPanel>
          <DashTabs>
            <DashTab $active>Dashboard</DashTab>
            <DashTab>Properties</DashTab>
            <DashTab>SQL</DashTab>
            <DashTab>Statistics</DashTab>
            <DashTab>Dependencies</DashTab>
            <DashTab>Dependents</DashTab>
            <PanelClose><FaTimes size={32} /></PanelClose>
          </DashTabs>
          <ScrollBody>
            <Dashboard>
              <CardRow $mb={19}>
                <Card $h={481} />
                <Card $h={481}>
                  <CardHeader $h={133}>
                    <CardTitle />
                    <LegendSwatch $c="#00bcd4" /><LegendText>Transactions</LegendText>
                    <LegendSwatch $c="#9ccc65" /><LegendText>Commits</LegendText>
                    <LegendSwatch $c="#e64a19" /><LegendText>Rollbacks</LegendText>
                  </CardHeader>
                  <ChartSvg width="905" height="340">
                    <Grid ys={[27, 121]} x1={100} x2={866} />
                    <line x1="100" x2="866" y1="214" y2="214" stroke="#00bcd4" strokeWidth="4" />
                    <line x1="100" x2="866" y1="308" y2="308" stroke="#e64a19" strokeWidth="2" />
                  </ChartSvg>
                </Card>
              </CardRow>
              <CardRow $mb={18}>
                <Card $h={481}>
                  <CardHeader $h={77} />
                  <ChartSvg width="590" height="400">
                    <Grid ys={[363]} x1={70} x2={86} />
                    <text x="66" y="372">0</text>
                    <line x1="86" x2="555" y1="361" y2="361" stroke="#00bcd4" strokeWidth="5" />
                  </ChartSvg>
                </Card>
                <Card $h={426}>
                  <CardHeader $h={77} />
                  <ChartSvg width="590" height="345">
                    <Grid ys={[270]} x1={111} x2={555} />
                    <text x="107" y="278">200</text>
                    <text x="107" y="318">0</text>
                    <path d="M255 310L259 100L264 310" stroke="#8fbf5e" strokeWidth="4" fill="none" />
                    <line x1="125" x2="555" y1="310" y2="310" stroke="#00bcd4" strokeWidth="4" />
                  </ChartSvg>
                </Card>
                <Card $h={426}>
                  <CardHeader $h={77}>
                    <CardTitle>Block I/O</CardTitle>
                    <LegendSwatch $c="#00bcd4" /><LegendText>Reads</LegendText>
                    <LegendSwatch $c="#9ccc65" /><LegendText>Hits</LegendText>
                  </CardHeader>
                  <ChartSvg width="590" height="345">
                    <Grid ys={[29, 60, 91, 123, 154, 185, 216, 248, 279]} x1={80} x2={554} />
                    <text x="76" y="256">20</text>
                    <text x="76" y="287">10</text>
                    <text x="76" y="318">0</text>
                    <path d="M233 310L239 50L245 310" stroke="#9ccc65" strokeWidth="5" fill="none" />
                    <line x1="97" x2="554" y1="310" y2="310" stroke="#00bcd4" strokeWidth="3" />
                  </ChartSvg>
                </Card>
              </CardRow>
              <Activity>
                <ActivityTitle>Server activity</ActivityTitle>
                <ActivityTabs>
                  <SubTabs>
                    <SubTab $active>Sessions</SubTab>
                    <SubTab>Locks</SubTab>
                    <SubTab>Prepared Transactions</SubTab>
                  </SubTabs>
                  <SearchCell><FaSearch size={36} /></SearchCell>
                  <SearchText>Search</SearchText>
                  <RefreshCell><FaSync size={36} /></RefreshCell>
                </ActivityTabs>
                <ActivityBody>
                  <SessionTable>
                    <TableRow $h={122} $line>
                      <HeadCell /><HeadCell /><HeadCell />
                      <HeadCell>PID</HeadCell>
                      <HeadCell>User</HeadCell>
                      <HeadCell>Application</HeadCell>
                      <HeadCell>Client</HeadCell>
                      <HeadCell>Backend start</HeadCell>
                      <HeadCell>State</HeadCell>
                      <HeadCell>Wait event</HeadCell>
                    </TableRow>
                    <TableRow $h={60}>
                      <HeadCell /><HeadCell /><HeadCell /><HeadCell /><HeadCell />
                      <HeadCell /><HeadCell /><HeadCell /><HeadCell /><HeadCell />
                    </TableRow>
                  </SessionTable>
                </ActivityBody>
              </Activity>
            </Dashboard>
            <MainScroll><MainThumb /></MainScroll>
          </ScrollBody>
        </RightPanel>
      </Workspace>

      <Dialog>
        <DialogHead>
          Backup (Database: tolldata)
          <ExpandBtn><FaExpandAlt size={30} /></ExpandBtn>
        </DialogHead>
        <DialogTabs>
          <DashTab $active>General</DashTab>
          <DashTab>Dump options</DashTab>
        </DialogTabs>
        <DialogBody>
          <Form>
            <FormRow>
              <Label>Filename</Label>
              <Field>tolldatabackup<EllipsisBtn><FaEllipsisH size={38} /></EllipsisBtn></Field>
            </FormRow>
            <FormRow>
              <Label>Format</Label>
              <Field $focus>Tar<Caret /></Field>
            </FormRow>
            <FormRow>
              <Label>Compression ratio</Label>
              <Field $disabled />
            </FormRow>
            <FormRow>
              <Label>Encoding</Label>
              <Field $placeholder>Select an item...<Caret /></Field>
            </FormRow>
            <FormRow>
              <Label>Number of jobs</Label>
              <Field $disabled />
            </FormRow>
          </Form>
          <DialogScroll><DialogThumb /></DialogScroll>
        </DialogBody>
        <DialogFoot>
          <Btn $w={80}><FaInfo size={38} /></Btn>
          <Btn $w={93}><FaQuestion size={40} /></Btn>
          <Btn $w={214} $push $gap={2}><FaTimes size={38} />Cancel</Btn>
          <Btn $w={231} $primary><FaSave size={36} />Backup</Btn>
          <Grip width="20" height="20" viewBox="0 0 20 20" fill="#c4c8d0">
            <rect x="16" y="4" width="3" height="3" /><rect x="10" y="10" width="3" height="3" /><rect x="16" y="10" width="3" height="3" />
            <rect x="4" y="16" width="3" height="3" /><rect x="10" y="16" width="3" height="3" /><rect x="16" y="16" width="3" height="3" />
          </Grip>
        </DialogFoot>
      </Dialog>
    </Page>
  );
}
